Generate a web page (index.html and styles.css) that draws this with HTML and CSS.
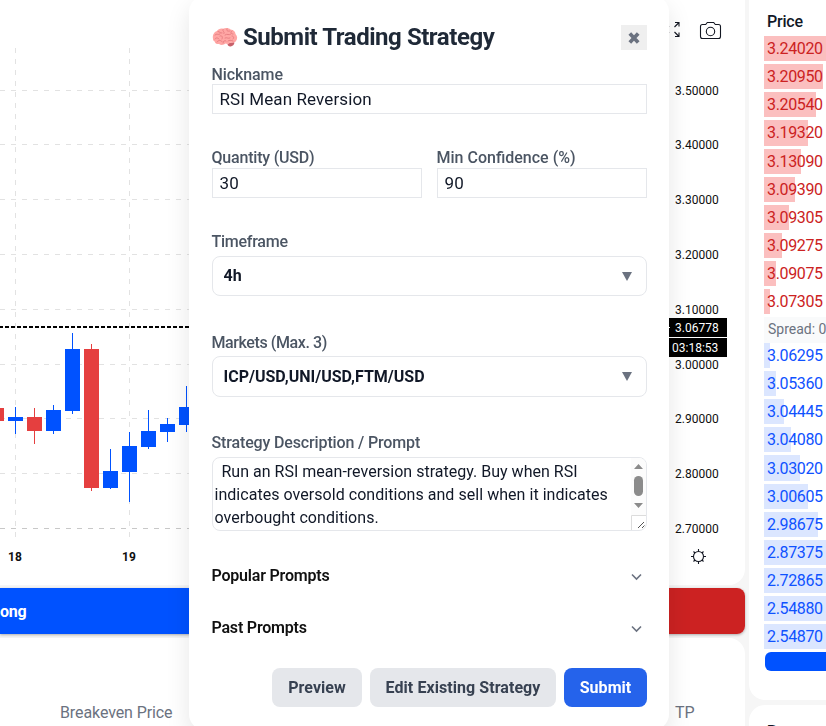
FILE: index.html
```
<!DOCTYPE html>
<html lang="en">
<head>
  <meta charset="UTF-8">
  <title>Submit Trading Strategy</title>
  <link rel="stylesheet" href="styles.css">
</head>
<body>
  <div class="page">
    <main class="main-col">
      <section class="chart-card">
        <svg class="chart" width="745" height="585" viewBox="0 0 745 585">
          <!-- grid -->
          <path class="grid" d="M0 90.5H669M0 144.5H669M0 199.5H669M0 254.5H669M0 309.5H669M0 364.5H669M0 418.5H669M0 473.5H669"/>
          <path class="grid grid-dark" d="M0 528.5H669"/>
          <path class="grid" d="M15.5 48V537M129.5 48V537"/>
          <path class="price-line" d="M-1 327H669"/>
          <!-- candles -->
          <g class="down">
            <path d="M0 408h4v13H0zM27 417h15v14H27zM34 408h1v36h-1zM84 349h15v139H84zM91 344h1v147h-1z"/>
          </g>
          <g class="up">
            <path d="M8 417h15v4H8zM15 407h1v27h-1zM46 410h15v21H46zM53 405h1v29h-1zM65 349h15v62H65zM72 333h1v81h-1z"/>
            <path d="M103 471h15v17h-15zM110 449h1v40h-1zM122 446h15v26h-15zM129 432h1v70h-1zM141 431h15v16h-15zM148 410h1v39h-1z"/>
            <path d="M160 424h15v8h-15zM167 418h1v24h-1zM179 407h15v18h-15zM186 386h1v46h-1z"/>
          </g>
          <!-- price axis -->
          <g class="axis">
            <text x="675" y="95">3.50000</text>
            <text x="675" y="149">3.40000</text>
            <text x="675" y="204">3.30000</text>
            <text x="675" y="259">3.20000</text>
            <text x="675" y="314">3.10000</text>
            <text x="675" y="369">3.00000</text>
            <text x="675" y="423">2.90000</text>
            <text x="675" y="478">2.80000</text>
            <text x="675" y="533">2.70000</text>
          </g>
          <path d="M665 318h62v19h-62zM665 338h62v19h-62z"/>
          <path d="M665 327h5v1h-5z" fill="#fff"/>
          <g class="axis axis-now">
            <text x="675" y="332">3.06778</text>
            <text x="672" y="352">03:18:53</text>
          </g>
          <g class="axis axis-day">
            <text x="15" y="561">18</text>
            <text x="129" y="561">19</text>
          </g>
          <!-- fullscreen, camera, settings -->
          <g class="icon">
            <path d="M674.5 27l4-4M675 22.500h4v4M674.500 32l4 4M675 36.500h4v-4M669 27l-4-4M669 32l-4 4"/>
            <path d="M702.500 24.500h3.200l1.600-2h6.400l1.600 2h3.200a2 2 0 0 1 2 2v10a2 2 0 0 1-2 2h-16a2 2 0 0 1-2-2v-10a2 2 0 0 1 2-2z"/>
            <circle cx="710.500" cy="31.500" r="4.200"/>
            <circle cx="698.500" cy="556.500" r="5"/>
            <path d="M698.500 549v2.500M698.500 561.500v2.500M691 556.500h2.500M703.500 556.500h2.500M693.500 551.500l1.500 1.500M703.500 551.500l-1.500 1.500M693.500 561.500l1.500-1.500M703.500 561.500l-1.500-1.500"/>
          </g>
        </svg>
      </section>
      <div class="trade-bar">
        <div class="long">ong</div>
        <div class="short"></div>
      </div>
      <section class="positions">
        <span class="col-breakeven">Breakeven Price</span>
        <span class="col-tp">TP</span>
      </section>
    </main>

    <aside class="side-col">
      <section class="book">
        <div class="book-head">Price</div>
        <div class="rows asks">
          <div class="row"><i style="width:70px"></i><span>3.24020</span></div>
          <div class="row"><i style="width:59px"></i><span>3.20950</span></div>
          <div class="row"><i style="width:52px"></i><span>3.20540</span></div>
          <div class="row"><i style="width:44px"></i><span>3.19320</span></div>
          <div class="row"><i style="width:37px"></i><span>3.13090</span></div>
          <div class="row"><i style="width:31px"></i><span>3.09390</span></div>
          <div class="row"><i style="width:25px"></i><span>3.09305</span></div>
          <div class="row"><i style="width:18px"></i><span>3.09275</span></div>
          <div class="row"><i style="width:12px"></i><span>3.09075</span></div>
          <div class="row"><i style="width:6px"></i><span>3.07305</span></div>
        </div>
        <div class="spread">Spread: 0</div>
        <div class="rows bids">
          <div class="row"><i style="width:6px"></i><span>3.06295</span></div>
          <div class="row"><i style="width:12px"></i><span>3.05360</span></div>
          <div class="row"><i style="width:20px"></i><span>3.04445</span></div>
          <div class="row"><i style="width:27px"></i><span>3.04080</span></div>
          <div class="row"><i style="width:36px"></i><span>3.03020</span></div>
          <div class="row"><i style="width:44px"></i><span>3.00605</span></div>
          <div class="row"><i style="width:54px"></i><span>2.98675</span></div>
          <div class="row"><i style="width:70px"></i><span>2.87375</span></div>
          <div class="row"><i style="width:70px"></i><span>2.72865</span></div>
          <div class="row"><i style="width:70px"></i><span>2.54880</span></div>
          <div class="row"><i style="width:70px"></i><span>2.54870</span></div>
        </div>
        <div class="ratio"></div>
      </section>
      <section class="trades">Recent</section>
    </aside>
  </div>

  <div class="modal">
    <header class="modal-head">
      <svg class="brain" width="26" height="22" viewBox="0 0 26 22">
        <path d="M17 16l5-1c1 2-1 4-3.500 4.500-1.500.2-3-1-3-2.500z" fill="#c8606a"/>
        <path d="M1 12C.2 8 2 5 5 4c1-2 4-3 6-2.300C14 .5 17 1 18.500 2.500c3 .3 5 2.500 5 4.500 2 2 2.300 5 .5 7-1.500 2-4 2-6 1.700-1 1.300-3 1.500-4.500.8C12 18 9 18.500 7 17c-2 .3-4-.5-4.300-2.500C1.500 14 1 13 1 12z" fill="#ffa6a4"/>
        <path d="M3 8c2-2 3 .5 5-1M6 4.500c2 0 2 2 4 1.500M11 2.500c-1 2 2 2 1 4M15 2c-1 2 1 2.500 3 2M20 4c-2 1-1 3 1 3M13 8c2-2 4 1 6-1M8 9c2-1 3 1 2 3M3 12c1-2 3-1 4 0M5 15c1-2 4-2 5-.5M11 16c0-2 2-3 3-2M13 11c2-1 3 1 5 0M20 9c2 0 2 2 1 3M16 14c1-1 3-1 5 0" fill="none" stroke="#e47c80" stroke-width=".9" stroke-linecap="round"/>
      </svg>
      <h2>Submit Trading Strategy</h2>
      <button class="close">
        <svg width="12" height="12" viewBox="0 0 12 12"><path d="M1.800 1.500l8.400 9M10.200 1.500l-8.400 9" stroke="#6b7280" stroke-width="3.700"/></svg>
      </button>
    </header>

    <label class="lbl-nick">Nickname</label>
    <div class="input">RSI Mean Reversion</div>

    <div class="pair">
      <div>
        <label class="lbl-qty">Quantity (USD)</label>
        <div class="input">30</div>
      </div>
      <div>
        <label>Min Confidence (%)</label>
        <div class="input">90</div>
      </div>
    </div>

    <label class="lbl-time">Timeframe</label>
    <div class="select"><span>4h</span><i class="caret"></i></div>

    <label class="lbl-markets">Markets (Max. 3)</label>
    <div class="select select-markets"><span>ICP/USD,UNI/USD,FTM/USD</span><i class="caret"></i></div>

    <label class="lbl-desc">Strategy Description / Prompt</label>
    <div class="prompt">
      <p><span class="first-line">Run an RSI mean-reversion strategy. Buy when RSI</span><br>indicates oversold conditions and sell when it indicates<br>overbought conditions.</p>
      <svg width="15" height="72" viewBox="0 0 15 72">
        <path d="M0 0h15v57H0z" fill="#fcfcfc"/>
        <path d="M3 11h9L7.500 6zM3 45h9l-4.500 5z" fill="#8b8b8b"/>
        <rect x="3" y="18" width="9" height="20" rx="4.500" fill="#8b8b8b"/>
        <path d="M.5 72V57.500H15" fill="none" stroke="#dcdcdc"/>
        <path d="M7 70l6-6M11 70l2.500-2.500" stroke="#555" fill="none"/>
      </svg>
    </div>

    <div class="accordion"><span>Popular Prompts</span><svg width="11" height="8" viewBox="0 0 11 8"><path d="M1 1.500l4.500 4.500L10 1.500"/></svg></div>
    <div class="accordion accordion-past"><span>Past Prompts</span><svg width="11" height="8" viewBox="0 0 11 8"><path d="M1 1.500l4.500 4.500L10 1.500"/></svg></div>

    <footer class="actions">
      <button class="btn btn-preview">Preview</button>
      <button class="btn btn-edit">Edit Existing Strategy</button>
      <button class="btn btn-submit">Submit</button>
    </footer>
  </div>
</body>
</html>
```
FILE: styles.css
```
* { box-sizing: border-box; }
body { margin: 0; height: 726px; overflow: hidden; background: #f6f6f6; font-family: Roboto, "Liberation Sans", sans-serif; font-size: 16px; color: #111827; }
h2, p { margin: 0; }
button { border: 0; padding: 0; font-family: inherit; }

.page { display: flex; gap: 4px; height: 726px; overflow: hidden; }
.main-col { width: 745px; flex: none; }
.side-col { width: 120px; flex: none; }

/* chart */
.chart-card { height: 585px; background: #fff; border-radius: 0 0 16px 0; }
.chart { display: block; }
.grid { stroke: #e2e2e2; stroke-dasharray: 5 6; fill: none; }
.grid-dark { stroke: #c8c8c8; }
.price-line { stroke: #000; stroke-width: 2; stroke-dasharray: 4 2; }
.up { fill: #0052ff; }
.down { fill: #e53f3f; }
.axis { font-size: 12px; fill: #0f0f0f; }
.axis-now { fill: #fff; }
.axis-day { font-weight: 700; text-anchor: middle; }
.icon { fill: none; stroke: #131722; stroke-width: 1.1; }

.trade-bar { display: flex; height: 46px; margin: 3px 0 4px; border-radius: 0 8px 8px 0; overflow: hidden; box-shadow: 0 1px 3px rgba(0,0,0,.3); color: #fff; font-weight: 700; line-height: 48px; letter-spacing: -.3px; }
.long { flex: 1; background: #0052ff; }
.short { flex: 1; background: #cc2222; }

.positions { display: flex; height: 100px; padding-top: 65px; background: #fff; border-radius: 0 16px 0 0; color: #6b7280; line-height: 20px; letter-spacing: -.1px; }
.col-breakeven { width: 615px; margin-left: 60px; }

/* order book */
.book { height: 700px; padding: 10px 0 0 15px; background: #fff; border-radius: 0 0 0 16px; }
.book-head { height: 26px; padding-left: 3px; line-height: 23px; font-weight: 500; letter-spacing: -.2px; }
.row { display: grid; height: 25.13px; margin-bottom: 3px; align-items: center; line-height: 25px; letter-spacing: -.35px; }
.row i, .row span { grid-area: 1 / 1; }
.row i { height: 100%; }
.row span { padding-left: 3px; }
.asks { color: #cc2222; }
.asks i { background: #fbbfbf; }
.bids { color: #0f52ff; }
.bids i { background: #dbe6ff; }
.spread { height: 25.7px; padding-left: 4px; background: #f9fafb; color: #6b7280; font-size: 14px; line-height: 25px; white-space: nowrap; }
.ratio { height: 19px; margin: 1px 0 0 1px; background: #0052ff; border-radius: 6px; }
.rows + .ratio { margin-top: 1.9px; }
.trades { height: 60px; margin-top: 5px; padding: 17px 18px; background: #fff; border-radius: 16px 0 0 0; font-weight: 700; }

/* modal */
.modal { position: fixed; top: -4px; left: 189px; width: 480px; height: 734px; padding: 29px 22px 0 23px; background: #fff; border-radius: 16px; box-shadow: 0 10px 25px rgba(0,0,0,.1); }
.modal-head { display: flex; height: 25px; align-items: center; }
.modal-head h2 { flex: 1; margin-left: 5px; color: #1f2937; font-size: 24px; line-height: 25px; letter-spacing: -.45px; white-space: nowrap; }
.brain { flex: none; }
.close { display: grid; width: 26px; height: 25px; place-items: center; background: #efefef; }

label { display: block; height: 20px; margin-left: -.5px; color: #4b5563; font-weight: 500; line-height: 22px; white-space: nowrap; }
.lbl-nick { margin-top: 14px; letter-spacing: -.1px; }
.lbl-qty { letter-spacing: -.2px; }
.input { height: 30px; padding-left: 6.5px; border: 1px solid #e5e7eb; line-height: 28px; font-size: 17px; letter-spacing: .1px; white-space: nowrap; }
.pair { display: grid; grid-template-columns: 1fr 1fr; gap: 15px; margin-top: 33px; }
.pair label { height: 21px; }
.lbl-time { margin-top: 33px; letter-spacing: -.25px; }
.select { display: flex; height: 40px; margin-top: 5px; padding: 0 14.5px 0 10.5px; align-items: center; justify-content: space-between; border: 1px solid #e5e7eb; border-radius: 8px; font-weight: 700; line-height: 20px; }
.select-markets { height: 41px; margin-top: 4px; }
.caret { border: 5px solid transparent; border-top: 9px solid #6b7280; border-bottom: 0; }
.lbl-markets { margin-top: 36px; letter-spacing: -.4px; }
.lbl-desc { margin-top: 35px; letter-spacing: -.14px; }
.prompt { display: flex; height: 74px; margin-top: 5px; justify-content: space-between; border: 1px solid #e5e7eb; border-radius: 8px; overflow: hidden; }
.prompt p { padding: 2px 0 0 1.5px; line-height: 23px; letter-spacing: .04px; white-space: nowrap; }
.first-line { margin-left: 7px; letter-spacing: .01px; }
.accordion { display: flex; height: 24px; margin-top: 32px; padding-right: 5px; align-items: center; justify-content: space-between; color: #111; font-weight: 600; letter-spacing: -.2px; }
.accordion span { margin-left: -.5px; }
.accordion-past { margin-top: 28px; }
.accordion svg { margin-top: 3px; fill: none; stroke: #6b7280; stroke-width: 1.6; }

.actions { display: flex; gap: 8px; justify-content: flex-end; margin-top: 29px; }
.btn { height: 39px; border-radius: 8px; background: #e5e7eb; color: #374151; font-size: 16px; font-weight: 700; line-height: 38px; letter-spacing: .06px; }
.btn-preview { width: 90px; }
.btn-edit { width: 186px; }
.btn-submit { width: 83px; background: #2563eb; color: #fff; }
```
